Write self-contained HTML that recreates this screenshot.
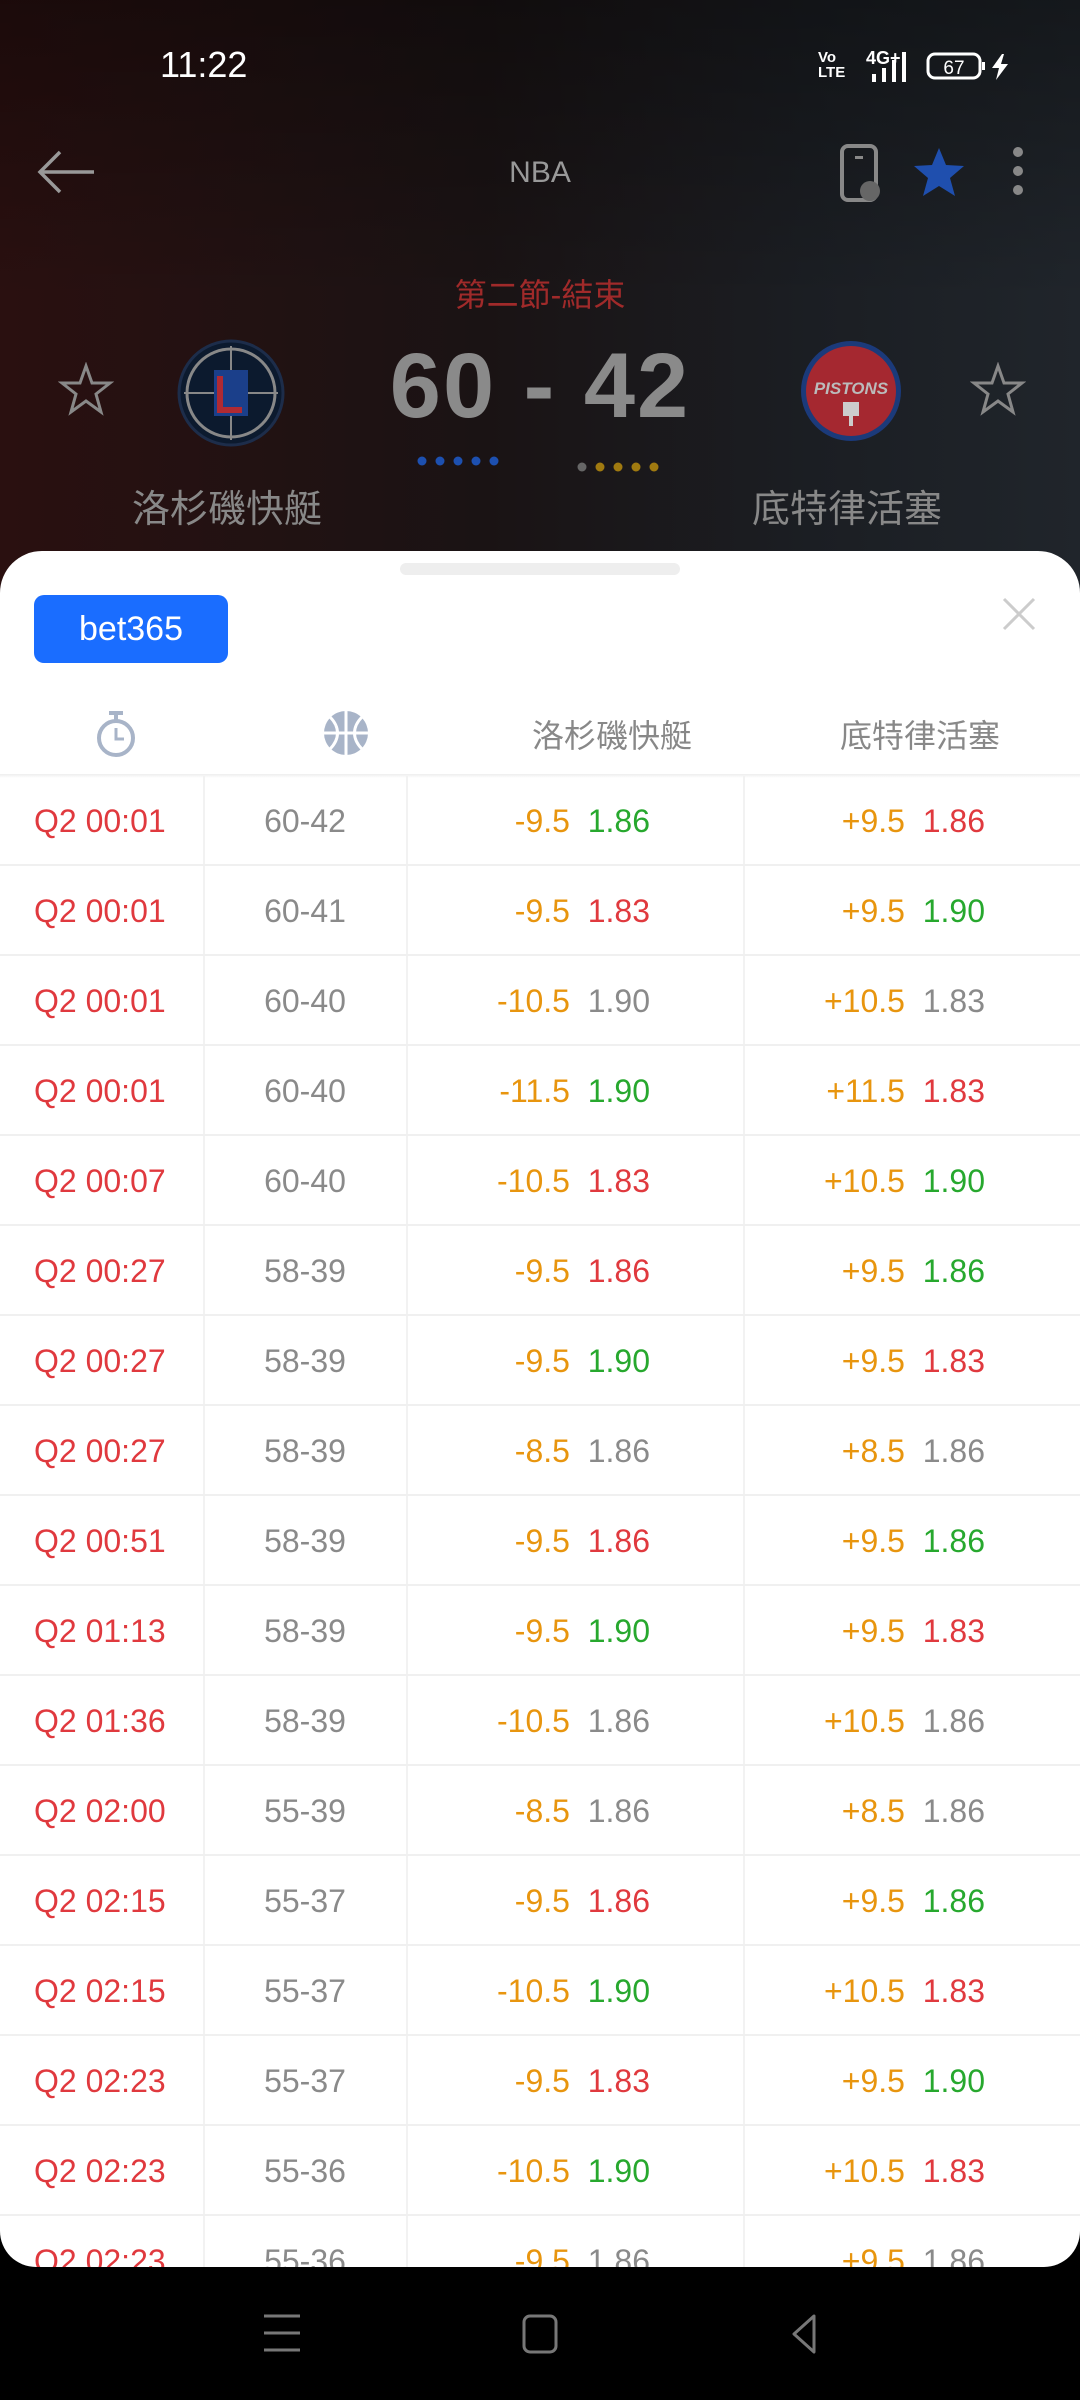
<!DOCTYPE html>
<html><head><meta charset="utf-8">
<style>
*{margin:0;padding:0;box-sizing:border-box}
body{width:1080px;height:2400px;overflow:hidden;position:relative;font-family:"Liberation Sans","Noto Sans CJK TC",sans-serif;background:#000}
.top{position:absolute;left:0;top:0;width:1080px;height:600px;background:linear-gradient(90deg,#2a1010 0%,#1a1314 45%,#1b1e23 75%,#20252b 100%)}
.top:after{content:"";position:absolute;left:0;top:0;right:0;height:300px;background:linear-gradient(180deg,rgba(0,0,0,.35),rgba(0,0,0,0))}
.t{position:absolute;z-index:2}
.sheet{position:absolute;left:0;top:551px;width:1080px;height:1716px;background:#fff;border-radius:42px 42px 36px 36px;overflow:hidden;z-index:3}
.row{position:absolute;left:0;width:1080px;height:90px;border-bottom:2px solid #f0f0f0;font-size:32px}
.row span{position:absolute;top:0;line-height:90px}
.c1{left:34px;color:#e0393e}
.c2{left:203px;width:204px;text-align:center;color:#8a8a8a}
.c3{right:430px}
.c4{right:95px}
.o{color:#e8950e}.g{color:#27a82e}.r{color:#e0393e}.gr{color:#8a8a8a}
.vl{position:absolute;top:776px;width:2px;height:1500px;background:#f2f2f2}
</style></head><body>
<div class="top"></div>
<div class="t" style="left:160px;top:44px;color:#fff;font-size:36px">11:22</div>
<div class="t" style="left:818px;top:50px;color:#fff;font-size:15px;line-height:15px;font-weight:bold">Vo<br>LTE</div>
<div class="t" style="left:866px;top:48px;color:#fff;font-size:18px;font-weight:bold">4G+</div>
<svg class="t" style="left:868px;top:50px" width="50" height="34"><rect x="4" y="24" width="4" height="8" fill="#fff"/><rect x="14" y="18" width="4" height="14" fill="#fff"/><rect x="24" y="10" width="4" height="22" fill="#fff"/><rect x="34" y="2" width="4" height="30" fill="#fff"/></svg>
<svg class="t" style="left:926px;top:52px" width="90" height="30"><rect x="2" y="2" width="52" height="24" rx="7" fill="none" stroke="#fff" stroke-width="3"/><rect x="56" y="10" width="3" height="8" fill="#fff"/><text x="28" y="22" fill="#fff" font-size="19" text-anchor="middle" font-family="Liberation Sans">67</text><path d="M76 2 L66 16 L73 16 L70 28 L82 12 L75 12 L78 2Z" fill="#fff"/></svg>
<svg class="t" style="left:36px;top:150px" width="60" height="44"><path d="M58 22H4M24 2L4 22L24 42" fill="none" stroke="#999" stroke-width="3.5"/></svg>
<div class="t" style="left:0;width:1080px;text-align:center;top:156px;color:#999;font-size:30px">NBA</div>
<svg class="t" style="left:838px;top:144px" width="50" height="60"><rect x="4" y="2" width="34" height="54" rx="6" fill="none" stroke="#888" stroke-width="4"/><rect x="17" y="12" width="8" height="3" fill="#888"/><circle cx="32" cy="47" r="10" fill="#666"/></svg>
<svg class="t" style="left:912px;top:146px" width="54" height="52"><path d="M27 2L34 19L52 20L38 32L43 50L27 40L11 50L16 32L2 20L20 19Z" fill="#1f4fae"/></svg>
<svg class="t" style="left:1010px;top:146px" width="20" height="50"><circle cx="8" cy="6" r="5" fill="#888"/><circle cx="8" cy="25" r="5" fill="#888"/><circle cx="8" cy="44" r="5" fill="#888"/></svg>
<div class="t" style="left:0;width:1080px;text-align:center;top:270px;color:#a02a2a;font-size:32px">第二節-結束</div>
<svg class="t" style="left:58px;top:362px" width="56" height="56"><path d="M28 4L34 21L52 21L38 32L43 50L28 39L13 50L18 32L4 21L22 21Z" fill="none" stroke="#888" stroke-width="3"/></svg>
<svg class="t" style="left:970px;top:362px" width="56" height="56"><path d="M28 4L34 21L52 21L38 32L43 50L28 39L13 50L18 32L4 21L22 21Z" fill="none" stroke="#888" stroke-width="3"/></svg>
<svg class="t" style="left:176px;top:338px" width="110" height="110"><circle cx="55" cy="55" r="52" fill="#0c1a2e" stroke="#1d2d4a" stroke-width="3"/><circle cx="55" cy="55" r="44" fill="none" stroke="#888" stroke-width="3"/><path d="M55 8V102M8 55H102" stroke="#888" stroke-width="2"/><rect x="38" y="32" width="34" height="46" fill="#1b3f8a"/><path d="M44 38V72H66" fill="none" stroke="#b02a33" stroke-width="6"/></svg>
<svg class="t" style="left:798px;top:338px" width="106" height="106"><circle cx="53" cy="53" r="50" fill="#1b3a7a"/><circle cx="53" cy="53" r="45" fill="#a52830"/><text x="53" y="56" fill="#bbb" font-size="17" font-weight="bold" font-style="italic" text-anchor="middle" font-family="Liberation Sans">PISTONS</text><rect x="45" y="64" width="16" height="14" fill="#ccc"/><rect x="51" y="78" width="4" height="10" fill="#ccc"/></svg>
<div class="t" style="left:380px;width:320px;text-align:center;top:334px;color:#8a8a8a;font-size:92px;font-weight:bold;letter-spacing:2px">60 - 42</div>
<svg class="t" style="left:412px;top:452px" width="260" height="26"><g fill="#1d50b0"><circle cx="10" cy="9" r="4.5"/><circle cx="28" cy="9" r="4.5"/><circle cx="46" cy="9" r="4.5"/><circle cx="64" cy="9" r="4.5"/><circle cx="82" cy="9" r="4.5"/></g><circle cx="170" cy="15" r="4.5" fill="#666"/><g fill="#a07a10"><circle cx="188" cy="15" r="4.5"/><circle cx="206" cy="15" r="4.5"/><circle cx="224" cy="15" r="4.5"/><circle cx="242" cy="15" r="4.5"/></g></svg>
<div class="t" style="left:132px;top:478px;color:#888;font-size:38px">洛杉磯快艇</div>
<div class="t" style="left:752px;top:478px;color:#888;font-size:38px">底特律活塞</div>

<div class="sheet">
<div style="position:absolute;left:400px;top:12px;width:280px;height:12px;border-radius:6px;background:#eee"></div>
<div style="position:absolute;left:34px;top:44px;width:194px;height:68px;border-radius:10px;background:#1a6dff;color:#fff;font-size:34px;line-height:68px;text-align:center">bet365</div>
<svg style="position:absolute;left:1002px;top:46px" width="34" height="34"><path d="M2 2L32 32M32 2L2 32" stroke="#ccc" stroke-width="3"/></svg>
<svg style="position:absolute;left:94px;top:158px" width="44" height="50"><rect x="15" y="2" width="14" height="4" fill="#a8b4c8"/><rect x="20" y="5" width="4" height="6" fill="#a8b4c8"/><circle cx="22" cy="29" r="17" fill="none" stroke="#a8b4c8" stroke-width="4"/><path d="M22 19V30H30" fill="none" stroke="#a8b4c8" stroke-width="3"/></svg>
<svg style="position:absolute;left:322px;top:158px" width="48" height="48"><circle cx="24" cy="24" r="22" fill="#a8b4c8"/><path d="M24 2V46M2 24H46M8 8C18 18 18 30 8 40M40 8C30 18 30 30 40 40" stroke="#fff" stroke-width="3" fill="none"/></svg>
<div style="position:absolute;left:532px;top:160px;color:#888;font-size:32px">洛杉磯快艇</div>
<div style="position:absolute;left:840px;top:160px;color:#888;font-size:32px">底特律活塞</div>
<div style="position:absolute;left:0;top:223px;width:1080px;height:4px;background:linear-gradient(#eee,#fff)"></div>
</div>
<div style="position:absolute;left:0;top:776px;width:1080px;height:1491px;overflow:hidden;z-index:4;border-radius:0 0 36px 36px">
<div class="vl" style="left:203px;top:0"></div><div class="vl" style="left:406px;top:0"></div><div class="vl" style="left:743px;top:0"></div>
<div class="row" style="top:0"><span class="c1">Q2 00:01</span><span class="c2">60-42</span><span class="c3"><b class="o" style="font-weight:normal">-9.5</b>&nbsp; <i class="g" style="font-style:normal">1.86</i></span><span class="c4"><i class="o" style="font-style:normal">+9.5</i>&nbsp; <i class="r" style="font-style:normal">1.86</i></span></div>
</div>
<script>
var d=[["00:01","60-41","-9.5","1.83","r","+9.5","1.90","g"],["00:01","60-40","-10.5","1.90","gr","+10.5","1.83","gr"],["00:01","60-40","-11.5","1.90","g","+11.5","1.83","r"],["00:07","60-40","-10.5","1.83","r","+10.5","1.90","g"],["00:27","58-39","-9.5","1.86","r","+9.5","1.86","g"],["00:27","58-39","-9.5","1.90","g","+9.5","1.83","r"],["00:27","58-39","-8.5","1.86","gr","+8.5","1.86","gr"],["00:51","58-39","-9.5","1.86","r","+9.5","1.86","g"],["01:13","58-39","-9.5","1.90","g","+9.5","1.83","r"],["01:36","58-39","-10.5","1.86","gr","+10.5","1.86","gr"],["02:00","55-39","-8.5","1.86","gr","+8.5","1.86","gr"],["02:15","55-37","-9.5","1.86","r","+9.5","1.86","g"],["02:15","55-37","-10.5","1.90","g","+10.5","1.83","r"],["02:23","55-37","-9.5","1.83","r","+9.5","1.90","g"],["02:23","55-36","-10.5","1.90","g","+10.5","1.83","r"],["02:23","55-36","-9.5","1.86","gr","+9.5","1.86","gr"]];
var c=document.querySelectorAll('body>div')[document.querySelectorAll('body>div').length-1],h='';
d.forEach(function(r,i){h+='<div class="row" style="top:'+((i+1)*90)+'px"><span class="c1">Q2 '+r[0]+'</span><span class="c2">'+r[1]+'</span><span class="c3"><i class="o" style="font-style:normal">'+r[2]+'</i>&nbsp; <i class="'+r[4]+'" style="font-style:normal">'+r[3]+'</i></span><span class="c4"><i class="o" style="font-style:normal">'+r[5]+'</i>&nbsp; <i class="'+r[7]+'" style="font-style:normal">'+r[6]+'</i></span></div>'});
c.insertAdjacentHTML('beforeend',h);
</script>
<svg style="position:absolute;left:262px;top:2310px;z-index:5" width="600" height="50"><path d="M2 6H38M2 23H38M2 40H38" stroke="#777" stroke-width="3"/><rect x="262" y="6" width="32" height="36" rx="6" fill="none" stroke="#777" stroke-width="3"/><path d="M552 6L532 24L552 42Z" fill="none" stroke="#777" stroke-width="3" stroke-linejoin="round"/></svg>
</body></html>
